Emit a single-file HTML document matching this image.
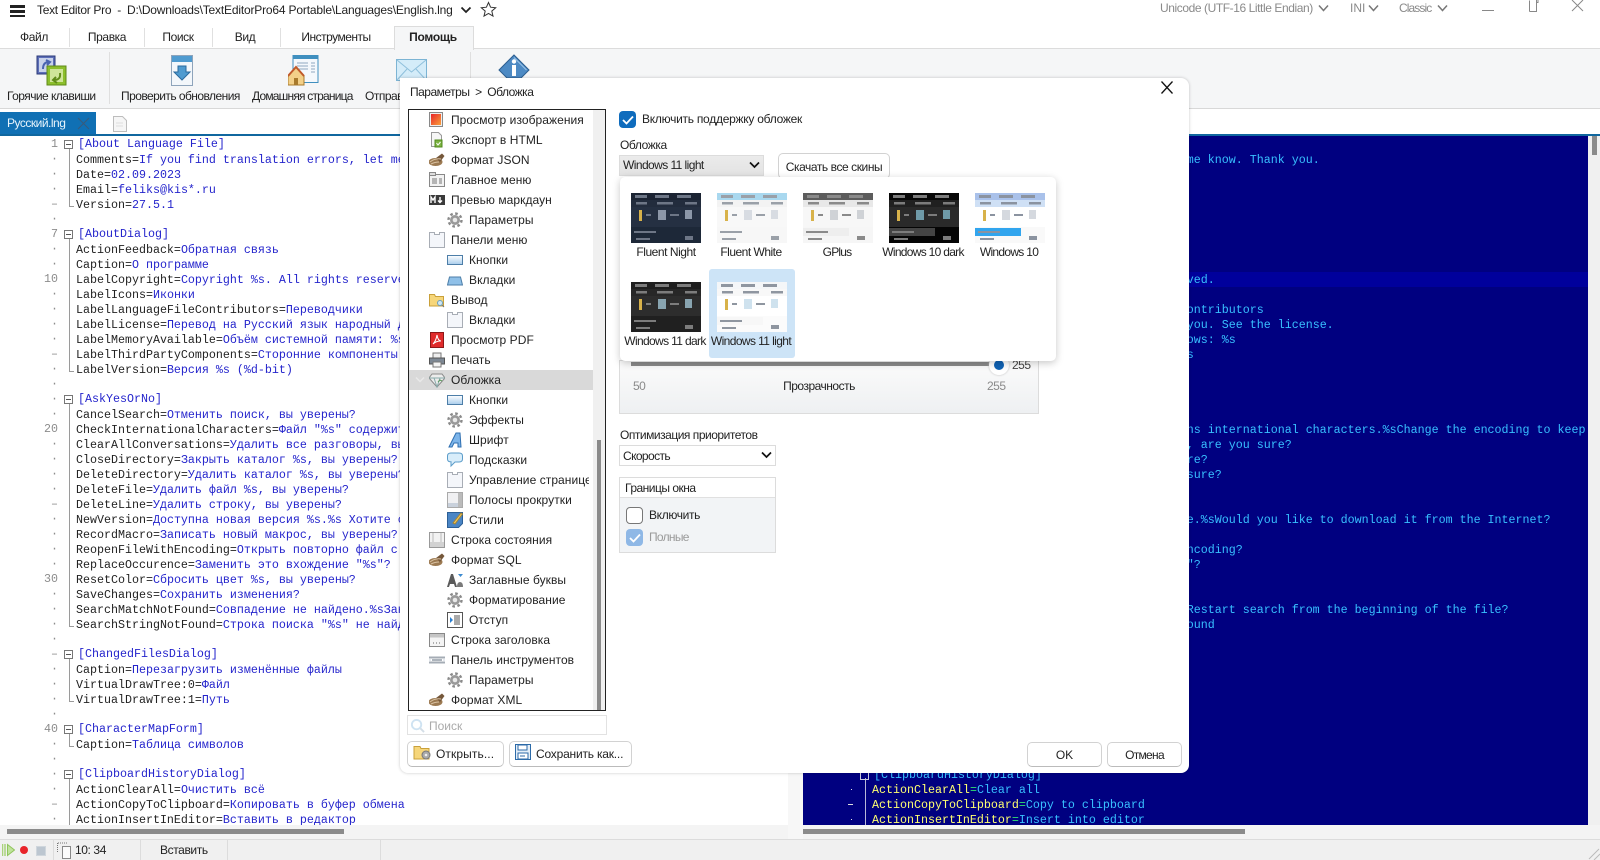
<!DOCTYPE html>
<html lang="ru"><head><meta charset="utf-8"><title>Text Editor Pro</title>
<style>
html,body{margin:0;padding:0;width:1600px;height:860px;overflow:hidden;background:#fff}
body{position:relative;font:12px/16px "Liberation Sans","Noto Sans CJK SC",sans-serif;color:#222}
.a{position:absolute;white-space:pre}
.c{transform:translateX(-50%)}
.g{color:#8a8a8a}
.m{font:11.67px/15px "Liberation Mono",monospace;white-space:pre}
.e{position:absolute;top:138px;left:76px;color:#222;white-space:normal!important}
.e div{height:15px;white-space:pre}
.e b,.e u{font-weight:400;text-decoration:none;color:#2424cc}
.e u{margin-left:2px;position:relative;top:-1px}
.num{position:absolute;top:137px;left:0;width:58px;text-align:right;color:#8c8c8c}
.num div{height:15px}
.fl{position:absolute;left:69px;width:4px;border-left:1px solid #9a9a9a;border-bottom:1px solid #9a9a9a}
.bx{position:absolute;left:64px;width:7px;height:7px;border:1px solid #777;background:#fff}
.bx:after{content:"";position:absolute;left:1px;top:3px;width:5px;height:1px;background:#555}
.rl{position:absolute;left:872px;color:#ffff70;margin-top:1px}
.rl i{font-style:normal;color:#30e070}
.rl b{font-weight:400;color:#38c0ff}
.dlg{position:absolute;left:400px;top:78px;width:789px;height:695px;background:#fff;border-radius:0 8px 8px 8px;box-shadow:0 0 3px rgba(0,0,0,.22)}
.btn{position:absolute;box-sizing:border-box;background:#fff;border:1px solid #d2d2d2;border-bottom-color:#bbb;border-radius:5px;text-align:center}
.tree{position:absolute;left:409px;top:110px;width:180px;height:600px;overflow:hidden}
.r{height:20px;line-height:20px;padding-left:42px;position:relative;white-space:nowrap;letter-spacing:.06px}
.r.s{padding-left:60px}
.r svg{position:absolute;left:20px;top:2px;width:16px;height:16px}
.r.s svg{left:38px}
.cb{position:absolute;width:17px;height:17px;box-sizing:border-box;border-radius:4px}
.th{position:absolute;width:70px;height:50px}
.tb{letter-spacing:-.4px}
</style></head><body>
<svg width="0" height="0" style="position:absolute">
<defs>
<linearGradient id="gr" x1="0" y1="0" x2="1" y2="1"><stop offset="0" stop-color="#e8252a"/><stop offset="1" stop-color="#f9a13a"/></linearGradient>
<linearGradient id="bl" x1="0" y1="0" x2="0" y2="1"><stop offset="0" stop-color="#fff"/><stop offset="1" stop-color="#a9cdec"/></linearGradient>
<symbol id="i-img" viewBox="0 0 16 16"><rect x=".5" y=".5" width="13" height="14" fill="#eee" stroke="#888"/><rect x="2" y="2" width="10" height="11" fill="url(#gr)"/></symbol>
<symbol id="i-html" viewBox="0 0 16 16"><path d="M2.500.5h7l3 3v11h-10z" fill="#f6f6f6" stroke="#999"/><rect x="6" y="8" width="7" height="7" fill="#7cb342" stroke="#4f8a1c"/><path d="M7.500 11l1.500 2 2.500-3" fill="none" stroke="#fff"/></symbol>
<symbol id="i-brush" viewBox="0 0 16 16"><ellipse cx="6.500" cy="10" rx="7" ry="4" fill="#9c7a52"/><path d="M7 6l6-4.500 2.500 2.500-4.500 6z" fill="#75573a"/><path d="M1 10q5-4 11-3M2 12q4-2 8-2" stroke="#d9c2a3" fill="none"/></symbol>
<symbol id="i-menu" viewBox="0 0 16 16"><rect x=".5" y="2.500" width="15" height="12" fill="#f2f2f2" stroke="#888"/><rect x=".5" y=".5" width="6" height="3" fill="#ddd" stroke="#888"/><path d="M3 7h5M3 9h5M3 11h5M10 7h3M10 9h3M10 11h3" stroke="#777"/></symbol>
<symbol id="i-md" viewBox="0 0 16 16"><rect y="3" width="16" height="10" fill="#3a3a3a"/><path d="M2 11V5l2 3 2-3v6M11 5v5M9 8.500l2 2 2-2" stroke="#fff" stroke-width="1.400" fill="none"/></symbol>
<symbol id="i-gear" viewBox="0 0 16 16"><circle cx="8" cy="8" r="5" fill="#9a9a9a"/><circle cx="8" cy="8" r="6.500" fill="none" stroke="#8a8a8a" stroke-width="2.400" stroke-dasharray="2.600 2.500"/><circle cx="8" cy="8" r="2.300" fill="#e9e9e9"/></symbol>
<symbol id="i-page" viewBox="0 0 16 16"><path d="M.5 15.500V.5h5v2h5V.5h5v15z" fill="#f4f6fa" stroke="#a8adb5"/></symbol>
<symbol id="i-btn" viewBox="0 0 16 16"><rect x=".5" y="3.500" width="15" height="9" fill="url(#bl)" stroke="#4d7ea8"/></symbol>
<symbol id="i-tab" viewBox="0 0 16 16"><path d="M.5 13l2-8h11l2 8z" fill="#8fc0e8" stroke="#4d7ea8"/></symbol>
<symbol id="i-fold" viewBox="0 0 16 16"><path d="M.5 14V2.500h5l1 2h8V14z" fill="#f6d67a" stroke="#c9a03a"/><circle cx="11" cy="11" r="2.500" fill="#cfe6f5" stroke="#6aa0c0"/><path d="M13 13l2 2" stroke="#777"/></symbol>
<symbol id="i-pdf" viewBox="0 0 16 16"><rect x="1.500" y=".5" width="13" height="15" fill="#e02b2b" stroke="#8d1717"/><path d="M4 12q3-3 4-9 1 6 4 6-5 0-8 3z" fill="none" stroke="#fff"/></symbol>
<symbol id="i-print" viewBox="0 0 16 16"><rect x="4" y="1" width="8" height="5" fill="#eee" stroke="#777"/><rect x=".5" y="6" width="15" height="6" fill="#7d8894" stroke="#555"/><rect x="4" y="10" width="8" height="5" fill="#f4f4f4" stroke="#777"/></symbol>
<symbol id="i-skin" viewBox="0 0 16 16"><path d="M3 2h10l3 4-8 9-8-9z" fill="#ececec" stroke="#8a8a8a"/><path d="M0 6h16M5 6l3 9 3-9" fill="none" stroke="#8aa"/><path d="M9 10l2-2 2 1" stroke="#5a9a5a" fill="none"/></symbol>
<symbol id="i-font" viewBox="0 0 16 16"><path d="M2 15L9 1h4l1 14h-3v-4H7l-2 4z" fill="#7db5ea" stroke="#2f6fb0"/></symbol>
<symbol id="i-tip" viewBox="0 0 16 16"><path d="M4 1h8q3.500 0 3.500 3v3q0 3-3.500 3H8l-4 4v-4.200Q.5 10 .5 7V4Q.5 1 4 1z" fill="#d8edfa" stroke="#5b9cc9"/></symbol>
<symbol id="i-scr" viewBox="0 0 16 16"><rect x=".5" y=".5" width="15" height="15" fill="#f0f0f2" stroke="#aaa"/><rect x="11" y="1" width="4" height="14" fill="#bbb"/><rect x="1" y="11" width="10" height="4" fill="#c9d1dc"/></symbol>
<symbol id="i-sty" viewBox="0 0 16 16"><path d="M.5.5h15v11l-4 4H.5z" fill="#4a85c5" stroke="#2c5f96"/><path d="M6 11L14 1l1.500 1L8 12z" fill="#f0c860" stroke="#a8842c"/></symbol>
<symbol id="i-stat" viewBox="0 0 16 16"><rect x=".5" y=".5" width="15" height="15" fill="#f2f2f2" stroke="#999"/><rect x="1" y="10" width="14" height="5" fill="#d2d2d2"/><path d="M4 1v9M12 1v9" stroke="#bbb"/></symbol>
<symbol id="i-caps" viewBox="0 0 16 16"><path d="M0 15L4 2h2l4 13H8L7 12H3l-1 3z" fill="#5a5a5a"/><path d="M10 15q0-5 3-5t3 5z" fill="#7a7a7a"/><path d="M11 2h5l-2.500 3z" fill="#3c8ad0"/></symbol>
<symbol id="i-ind" viewBox="0 0 16 16"><rect x=".5" y=".5" width="15" height="15" fill="#fff" stroke="#555"/><path d="M3 5l3 3-3 3z" fill="#2a7fd0"/><path d="M7 4h6M7 6h6M7 8h6M7 10h6M7 12h6" stroke="#555"/></symbol>
<symbol id="i-title" viewBox="0 0 16 16"><rect x=".5" y="1.500" width="15" height="13" fill="#f4f4f4" stroke="#888"/><rect x="1" y="2" width="14" height="3.500" fill="#c5c5c5"/><path d="M4 11h1M7 11h1M10 11h1" stroke="#666"/></symbol>
<symbol id="i-tool" viewBox="0 0 16 16"><path d="M0 5.500h16M0 10.500h16" stroke="#a5acb5" stroke-width="2"/><path d="M3 8h10" stroke="#5b6a7a"/><path d="M0 8h2M14 8h2" stroke="#c9d2dc"/></symbol>
<symbol id="th" viewBox="0 0 70 50">
<rect width="70" height="50" fill="var(--b)"/><rect width="70" height="7" fill="var(--t)"/><rect y="7" width="70" height="7" fill="var(--s)"/>
<rect y="14" width="70" height="20" fill="var(--p)"/><rect x="4" y="2" width="12" height="3" fill="var(--f)"/><rect x="24" y="2" width="14" height="3" fill="var(--f)"/><rect x="46" y="2" width="14" height="3" fill="var(--f)"/>
<rect x="5" y="9" width="11" height="2.500" fill="var(--f)"/><rect x="26" y="9" width="16" height="2.500" fill="var(--f)"/><rect x="54" y="9" width="12" height="2.500" fill="var(--f)"/>
<rect x="8" y="17" width="3" height="11" fill="#d8b24a"/><rect x="15" y="21" width="5" height="2" fill="var(--f)"/><rect x="27" y="17" width="8" height="10" fill="var(--x)"/><rect x="39" y="21" width="9" height="2" fill="var(--f)"/><rect x="54" y="17" width="7" height="9" fill="var(--x)"/>
<rect y="35" width="46" height="8" fill="var(--q)"/><rect x="3" y="38" width="22" height="2" fill="var(--f)"/><rect x="5" y="45" width="14" height="2" fill="var(--f)"/><rect x="54" y="43" width="8" height="4" fill="var(--f)"/>
</symbol>
<symbol id="srch" viewBox="0 0 16 16"><circle cx="7" cy="7" r="5" fill="none" stroke="#cfe3f2" stroke-width="2"/><path d="M11 11l4 4" stroke="#d4dee6" stroke-width="2"/></symbol>
</defs></svg>

<!-- title bar -->
<div class="a" style="left:10px;top:5px;width:15px;height:2.500px;background:#222"></div>
<div class="a" style="left:10px;top:10px;width:15px;height:2.500px;background:#222"></div>
<div class="a" style="left:10px;top:14.500px;width:15px;height:2.500px;background:#222"></div>
<div class="a" style="left:37px;top:2px;letter-spacing:-.3px">Text Editor Pro  -  <span style="letter-spacing:-.18px">D:\Downloads\TextEditorPro64 Portable\Languages\English.lng</span></div>
<svg class="a" style="left:460px;top:5px" width="12" height="10"><path d="M1.500 2.500L6 7l4.500-4.500" fill="none" stroke="#222" stroke-width="1.800"/></svg>
<svg class="a" style="left:480px;top:1px" width="17" height="17" viewBox="0 0 17 17"><path d="M8.500 1.500l2.100 4.700 5.100.5-3.900 3.400 1.200 5-4.500-2.700-4.500 2.700 1.200-5L1.300 6.700l5.100-.5z" fill="none" stroke="#333"/></svg>
<div class="a g" style="left:1160px;top:0;letter-spacing:-.42px">Unicode (UTF-16 Little Endian)</div>
<svg class="a" style="left:1318px;top:4px" width="11" height="9"><path d="M1 1.500L5.500 6.500 10 1.500" fill="none" stroke="#777" stroke-width="1.500"/></svg>
<div class="a g" style="left:1350px;top:0">INI</div>
<svg class="a" style="left:1368px;top:4px" width="11" height="9"><path d="M1 1.500L5.500 6.500 10 1.500" fill="none" stroke="#777" stroke-width="1.500"/></svg>
<div class="a g" style="left:1399px;top:0;letter-spacing:-.9px">Classic</div>
<svg class="a" style="left:1437px;top:4px" width="11" height="9"><path d="M1 1.500L5.500 6.500 10 1.500" fill="none" stroke="#777" stroke-width="1.500"/></svg>
<div class="a" style="left:1482px;top:10px;width:12px;height:1px;background:#888"></div>
<svg class="a" style="left:1526px;top:0" width="14" height="12"><path d="M3.500 11.500V.5M3.500 11.500h7V0M10.500 2.500H12V0" fill="none" stroke="#888"/></svg>
<svg class="a" style="left:1571px;top:0" width="13" height="12"><path d="M1 0l11 11M12 0L1 11" stroke="#888"/></svg>

<!-- tabs -->
<div class="a c tb" style="left:34px;top:29px">Файл</div>
<div class="a c tb" style="left:107px;top:29px">Правка</div>
<div class="a c tb" style="left:178px;top:29px">Поиск</div>
<div class="a c tb" style="left:245px;top:29px">Вид</div>
<div class="a c tb" style="left:336px;top:29px;letter-spacing:-.5px">Инструменты</div>
<div class="a" style="left:69px;top:28px;width:1px;height:19px;background:#e0e0e0"></div>
<div class="a" style="left:144px;top:28px;width:1px;height:19px;background:#e0e0e0"></div>
<div class="a" style="left:212px;top:28px;width:1px;height:19px;background:#e0e0e0"></div>
<div class="a" style="left:280px;top:28px;width:1px;height:19px;background:#e0e0e0"></div>
<!-- ribbon -->
<div class="a" style="left:0;top:48px;width:1600px;height:59px;background:#f5f6f7;border-top:1px solid #dcdcdc;border-bottom:1px solid #d8d8d8"></div>
<div class="a" style="left:394px;top:26px;width:78px;height:23px;background:#f5f6f7;border:1px solid #dcdcdc;border-bottom:0;box-sizing:content-box"></div>
<div class="a c" style="left:433px;top:29px;font-weight:700;letter-spacing:-.25px">Помощь</div>
<div class="a" style="left:109px;top:52px;width:1px;height:52px;background:#dfdfdf"></div>
<div class="a" style="left:470px;top:52px;width:1px;height:52px;background:#dfdfdf"></div>
<svg class="a" style="left:36px;top:55px" width="31" height="31" viewBox="0 0 31 31"><rect x="1" y="1" width="18" height="18" fill="#5d6fb8" stroke="#2c3a78"/><rect x="3" y="3" width="14" height="14" fill="#c8d2ea"/><path d="M7 14q0-7 6-7M10 5l4 2-3 3" fill="none" stroke="#4a64b0" stroke-width="2"/><rect x="11" y="11" width="19" height="19" fill="#8cbf2c" stroke="#5f8a18"/><rect x="14" y="14" width="13" height="13" fill="#cfe59a"/><path d="M24 18q1 7-6 7M21 28l-4-3 3-3" fill="none" stroke="#5f8a18" stroke-width="2"/></svg>
<svg class="a" style="left:171px;top:55px" width="22" height="31" viewBox="0 0 22 31"><rect x=".5" y=".5" width="21" height="30" fill="#f3f7fb" stroke="#8ea4bb"/><rect x="1" y="1" width="20" height="6" fill="#4f9bd0"/><path d="M7 11h8v6h4l-8 8-8-8h4z" fill="#4f9bd0" stroke="#2a6a9e"/></svg>
<svg class="a" style="left:288px;top:55px" width="31" height="31" viewBox="0 0 31 31"><rect x="5" y=".5" width="25" height="27" fill="#f4f8fc" stroke="#3f8fbf"/><rect x="5" y="1" width="25" height="3" fill="#3f8fbf"/><path d="M9 8h11M9 11h11M9 14h11M23 8h4M23 11h4M23 14h4M23 17h4" stroke="#8fa9bf"/><path d="M0 21L8 12l8 9v9H0z" fill="#f3d088" stroke="#a87a2c"/><path d="M0 21L8 12l8 9" fill="none" stroke="#c05a2a" stroke-width="2"/><rect x="6" y="23" width="4" height="7" fill="#a87a2c"/></svg>
<svg class="a" style="left:396px;top:59px" width="31" height="22" viewBox="0 0 31 22"><rect x=".5" y=".5" width="30" height="21" fill="#d4ecf9" stroke="#7cb4d4"/><path d="M1 1l14.500 12L30 1M1 21l10-11M30 21L20 10" fill="none" stroke="#8fc0dc"/></svg>
<svg class="a" style="left:498px;top:54px" width="32" height="24" viewBox="0 0 32 24"><path d="M16 1l15 15-8 8H9l-8-8z" fill="#4d8ac4" stroke="#2c5e90"/><path d="M16 3.500L28.500 16" fill="none" stroke="#9cc4e8"/><rect x="14" y="11" width="4" height="11" fill="#fff"/><circle cx="16" cy="7.500" r="2.200" fill="#fff"/></svg>
<div class="a" style="left:7px;top:88px;letter-spacing:-.55px">Горячие клавиши</div>
<div class="a" style="left:121px;top:88px;letter-spacing:-.55px">Проверить обновления</div>
<div class="a" style="left:252px;top:88px;letter-spacing:-.8px">Домашняя страница</div>
<div class="a" style="left:365px;top:88px;letter-spacing:-.5px">Отправить</div>

<!-- doc tab -->
<div class="a" style="left:0;top:112px;width:96px;height:22px;background:#1070b4"></div>
<div class="a" style="left:7px;top:115px;color:#e8f4fc;letter-spacing:-.5px">Русский.lng</div>
<svg class="a" style="left:77px;top:117px" width="13" height="13"><path d="M1 1l11 11M12 1L1 12" stroke="#3a5a7a"/></svg>
<svg class="a" style="left:113px;top:116px" width="14" height="16" viewBox="0 0 14 16"><path d="M.5.5h9l4 4v11H.500z" fill="#f6f6f6" stroke="#bdbdbd"/><path d="M3 7h7M3 10h7" stroke="#ddd"/></svg>
<div class="a" style="left:0;top:134px;width:1600px;height:2px;background:#10679f"></div>

<!-- left editor -->
<div class="a m num" style="white-space:normal"><div>1</div><div>·</div><div>·</div><div>·</div><div>–</div><div>·</div><div>7</div><div>·</div><div>·</div><div>10</div><div>·</div><div>·</div><div>·</div><div>·</div><div>–</div><div>·</div><div>·</div><div>·</div><div>·</div><div>20</div><div>·</div><div>·</div><div>·</div><div>·</div><div>–</div><div>·</div><div>·</div><div>·</div><div>·</div><div>30</div><div>·</div><div>·</div><div>·</div><div>·</div><div>–</div><div>·</div><div>·</div><div>·</div><div>·</div><div>40</div><div>·</div><div>·</div><div>·</div><div>·</div><div>–</div><div>·</div></div>
<div class="fl" style="top:148px;height:58px"></div><div class="fl" style="top:238px;height:133px"></div><div class="fl" style="top:403px;height:223px"></div><div class="fl" style="top:658px;height:43px"></div><div class="fl" style="top:733px;height:13px"></div><div class="fl" style="top:778px;height:47px;border-bottom:0"></div>
<div class="bx" style="top:140px"></div><div class="bx" style="top:230px"></div><div class="bx" style="top:395px"></div><div class="bx" style="top:650px"></div><div class="bx" style="top:725px"></div><div class="bx" style="top:770px"></div>
<div class="a m e">
<div><u>[About Language File]</u></div>
<div>Comments=<b>If you find translation errors, let me know. Thank you.</b></div>
<div>Date=<b>02.09.2023</b></div>
<div>Email=<b>feliks@kis*.ru</b></div>
<div>Version=<b>27.5.1</b></div>
<div></div>
<div><u>[AboutDialog]</u></div>
<div>ActionFeedback=<b>Обратная связь</b></div>
<div>Caption=<b>О программе</b></div>
<div>LabelCopyright=<b>Copyright %s. All rights reserved.</b></div>
<div>LabelIcons=<b>Иконки</b></div>
<div>LabelLanguageFileContributors=<b>Переводчики</b></div>
<div>LabelLicense=<b>Перевод на Русский язык народный дар</b></div>
<div>LabelMemoryAvailable=<b>Объём системной памяти: %s</b></div>
<div>LabelThirdPartyComponents=<b>Сторонние компоненты</b></div>
<div>LabelVersion=<b>Версия %s (%d-bit)</b></div>
<div></div>
<div><u>[AskYesOrNo]</u></div>
<div>CancelSearch=<b>Отменить поиск, вы уверены?</b></div>
<div>CheckInternationalCharacters=<b>Файл "%s" содержит</b></div>
<div>ClearAllConversations=<b>Удалить все разговоры, вы уверены?</b></div>
<div>CloseDirectory=<b>Закрыть каталог %s, вы уверены?</b></div>
<div>DeleteDirectory=<b>Удалить каталог %s, вы уверены?</b></div>
<div>DeleteFile=<b>Удалить файл %s, вы уверены?</b></div>
<div>DeleteLine=<b>Удалить строку, вы уверены?</b></div>
<div>NewVersion=<b>Доступна новая версия %s.%s Хотите скачать?</b></div>
<div>RecordMacro=<b>Записать новый макрос, вы уверены?</b></div>
<div>ReopenFileWithEncoding=<b>Открыть повторно файл с кодировкой?</b></div>
<div>ReplaceOccurence=<b>Заменить это вхождение "%s"?</b></div>
<div>ResetColor=<b>Сбросить цвет %s, вы уверены?</b></div>
<div>SaveChanges=<b>Сохранить изменения?</b></div>
<div>SearchMatchNotFound=<b>Совпадение не найдено.%sЗаново?</b></div>
<div>SearchStringNotFound=<b>Строка поиска "%s" не найдена</b></div>
<div></div>
<div><u>[ChangedFilesDialog]</u></div>
<div>Caption=<b>Перезагрузить изменённые файлы</b></div>
<div>VirtualDrawTree:0=<b>Файл</b></div>
<div>VirtualDrawTree:1=<b>Путь</b></div>
<div></div>
<div><u>[CharacterMapForm]</u></div>
<div>Caption=<b>Таблица символов</b></div>
<div></div>
<div><u>[ClipboardHistoryDialog]</u></div>
<div>ActionClearAll=<b>Очистить всё</b></div>
<div>ActionCopyToClipboard=<b>Копировать в буфер обмена</b></div>
<div style="height:12px;overflow:hidden">ActionInsertInEditor=<b>Вставить в редактор</b></div>
</div>
<!-- mask below left editor -->
<div class="a" style="left:0;top:825px;width:1600px;height:15px;background:#f4f4f4"></div>
<div class="a" style="left:7px;top:829px;width:337px;height:5px;background:#8b8b8b"></div>
<div class="a" style="left:788px;top:136px;width:15px;height:704px;background:#f7f7f7"></div>

<!-- right editor -->
<div class="a" style="left:803px;top:136px;width:785px;height:689px;background:#000080"></div>
<div class="a" style="left:803px;top:272px;width:785px;height:15px;background:#00009c"></div>
<div class="a" style="left:1588px;top:136px;width:12px;height:689px;background:#f0f0f0"></div>
<div class="a" style="left:1592px;top:136px;width:5px;height:19px;background:#8b8b8b"></div>
<div class="a" style="left:803px;top:829px;width:442px;height:5px;background:#8b8b8b"></div>
<div class="a m rl" style="top:152px">Comments<i>=</i><b>If you find translation errors, let me know. Thank you.</b></div>
<div class="a m rl" style="top:272px">LabelCopyright<i>=</i><b>Copyright %s. All rights reserved.</b></div>
<div class="a m rl" style="top:302px">LabelLanguageFileContributors<i>=</i><b>Language file contributors</b></div>
<div class="a m rl" style="top:317px">LabelLicense<i>=</i><b>This translation is provided to you. See the license.</b></div>
<div class="a m rl" style="top:332px">LabelMemoryAvailable<i>=</i><b>Available memory in Windows: %s</b></div>
<div class="a m rl" style="top:347px">LabelThirdPartyComponents<i>=</i><b>Third party used: %s</b></div>
<div class="a m rl" style="top:422px">CheckInternationalCharacters<i>=</i><b>File "%s" contains international characters.%sChange the encoding to keep</b></div>
<div class="a m rl" style="top:437px">ClearAllConversations<i>=</i><b>Clear all conversations, are you sure?</b></div>
<div class="a m rl" style="top:452px">CloseDirectory<i>=</i><b>Close directory %s, are you sure?</b></div>
<div class="a m rl" style="top:467px">DeleteDirectory<i>=</i><b>Delete directory %s, are you sure?</b></div>
<div class="a m rl" style="top:512px">NewVersion<i>=</i><b>A new version of it %s is available.%sWould you like to download it from the Internet?</b></div>
<div class="a m rl" style="top:542px">ReopenFileWithEncoding<i>=</i><b>Reopen the file with encoding?</b></div>
<div class="a m rl" style="top:557px">ReplaceOccurence<i>=</i><b>Replace the occurence of "%s"?</b></div>
<div class="a m rl" style="top:602px">SearchMatchNotFound<i>=</i><b>Search match not found.%sRestart search from the beginning of the file?</b></div>
<div class="a m rl" style="top:617px">SearchStringNotFound<i>=</i><b>Search string "%s" not found</b></div>
<div class="a m rl" style="top:767px;left:874px"><b>[ClipboardHistoryDialog]</b></div>
<div class="a m rl" style="top:782px">ActionClearAll<i>=</i><b>Clear all</b></div>
<div class="a m rl" style="top:797px">ActionCopyToClipboard<i>=</i><b>Copy to clipboard</b></div>
<div class="a m rl" style="top:812px;height:12px;overflow:hidden">ActionInsertInEditor<i>=</i><b>Insert into editor</b></div>
<div class="a" style="left:865px;top:778px;width:1px;height:47px;background:#b8b8d8"></div>
<div class="a" style="left:860px;top:771px;width:7px;height:7px;border:1px solid #ccd"></div>
<div class="a" style="left:851px;top:789px;width:1px;height:1px;background:#ddd"></div>
<div class="a" style="left:848px;top:804px;width:5px;height:1px;background:#ddd"></div>
<div class="a" style="left:851px;top:819px;width:1px;height:1px;background:#ddd"></div>

<!-- status bar -->
<div class="a" style="left:0;top:839px;width:1600px;height:21px;background:#f0f0f0;border-top:1px solid #dcdcdc;box-sizing:border-box"></div>
<svg class="a" style="left:2px;top:843px" width="13" height="14"><path d="M.5 1v12M3 1v12" stroke="#a9d27a" stroke-width="1.500"/><path d="M5.500 1.500L12.500 7l-7 5.500z" fill="#bfe39b" stroke="#8fc45c"/></svg>
<div class="a" style="left:20px;top:846px;width:8px;height:8px;border-radius:50%;background:#e8242a"></div>
<div class="a" style="left:36px;top:846px;width:8px;height:8px;background:#bcc6d0;border:1px solid #cfd6dc;box-sizing:content-box"></div>
<div class="a" style="left:53px;top:840px;width:1px;height:20px;background:#dcdcdc"></div>
<svg class="a" style="left:57px;top:842px" width="14" height="17"><path d="M5.500 4.500h8v12h-8z" fill="#fbfbfb" stroke="#888"/><path d="M.5 1v10M1 1h10" stroke="#777" stroke-dasharray="1 1"/></svg>
<div class="a" style="left:75px;top:842px;letter-spacing:-.4px">10: 34</div>
<div class="a" style="left:140px;top:840px;width:1px;height:20px;background:#dcdcdc"></div>
<div class="a" style="left:160px;top:842px;letter-spacing:-.4px">Вставить</div>
<div class="a" style="left:227px;top:840px;width:1px;height:20px;background:#dcdcdc"></div>
<div class="a" style="left:380px;top:840px;width:1px;height:20px;background:#dcdcdc"></div>
<svg class="a" style="left:1588px;top:848px" width="12" height="12"><path d="M11 1L1 11M12 6l-6 6" stroke="#bbb"/></svg>

<!-- dialog -->
<div class="dlg"></div>
<div class="a" style="left:410px;top:84px;letter-spacing:-.5px">Параметры  &gt;  Обложка</div>
<svg class="a" style="left:1161px;top:81px" width="12" height="13"><path d="M.5.5l11 12M11.500.5l-11 12" stroke="#111" stroke-width="1.300"/></svg>

<div class="a" style="left:408px;top:109px;width:198px;height:602px;box-sizing:border-box;border:1px solid #222;background:#fff"></div>
<div class="a" style="left:593px;top:110px;width:12px;height:600px;background:#f0f0f0"></div>
<div class="a" style="left:597px;top:440px;width:4px;height:270px;background:#8b8b8b"></div>
<div class="a" style="left:409px;top:370px;width:184px;height:20px;background:#d9d9d9"></div>
<svg class="a" style="left:415px;top:376px" width="10" height="8"><path d="M1 1.500L5 5.500 9 1.500" fill="none" stroke="#e9e9e9" stroke-width="1.500"/></svg>
<div class="tree">
<div class="r"><svg><use href="#i-img"/></svg>Просмотр изображения</div>
<div class="r"><svg><use href="#i-html"/></svg>Экспорт в HTML</div>
<div class="r"><svg><use href="#i-brush"/></svg>Формат JSON</div>
<div class="r"><svg><use href="#i-menu"/></svg>Главное меню</div>
<div class="r"><svg><use href="#i-md"/></svg>Превью маркдаун</div>
<div class="r s"><svg><use href="#i-gear"/></svg>Параметры</div>
<div class="r"><svg><use href="#i-page"/></svg>Панели меню</div>
<div class="r s"><svg><use href="#i-btn"/></svg>Кнопки</div>
<div class="r s"><svg><use href="#i-tab"/></svg>Вкладки</div>
<div class="r"><svg><use href="#i-fold"/></svg>Вывод</div>
<div class="r s"><svg><use href="#i-page"/></svg>Вкладки</div>
<div class="r"><svg><use href="#i-pdf"/></svg>Просмотр PDF</div>
<div class="r"><svg><use href="#i-print"/></svg>Печать</div>
<div class="r"><svg><use href="#i-skin"/></svg>Обложка</div>
<div class="r s"><svg><use href="#i-btn"/></svg>Кнопки</div>
<div class="r s"><svg><use href="#i-gear"/></svg>Эффекты</div>
<div class="r s"><svg><use href="#i-font"/></svg>Шрифт</div>
<div class="r s"><svg><use href="#i-tip"/></svg>Подсказки</div>
<div class="r s"><svg><use href="#i-page"/></svg>Управление страницей</div>
<div class="r s"><svg><use href="#i-scr"/></svg>Полосы прокрутки</div>
<div class="r s"><svg><use href="#i-sty"/></svg>Стили</div>
<div class="r"><svg><use href="#i-stat"/></svg>Строка состояния</div>
<div class="r"><svg><use href="#i-brush"/></svg>Формат SQL</div>
<div class="r s"><svg><use href="#i-caps"/></svg>Заглавные буквы</div>
<div class="r s"><svg><use href="#i-gear"/></svg>Форматирование</div>
<div class="r s"><svg><use href="#i-ind"/></svg>Отступ</div>
<div class="r"><svg><use href="#i-title"/></svg>Строка заголовка</div>
<div class="r"><svg><use href="#i-tool"/></svg>Панель инструментов</div>
<div class="r s"><svg><use href="#i-gear"/></svg>Параметры</div>
<div class="r"><svg><use href="#i-brush"/></svg>Формат XML</div>
</div>

<!-- search and bottom buttons -->
<div class="a" style="left:407px;top:715px;width:200px;height:20px;box-sizing:border-box;border:1px solid #e2e2e2;background:#fff"></div>
<svg class="a" style="left:410px;top:718px;width:15px;height:15px"><use href="#srch"/></svg>
<div class="a" style="left:429px;top:718px;color:#aaa">Поиск</div>
<div class="btn" style="left:407px;top:741px;width:97px;height:26px"></div>
<svg class="a" style="left:413px;top:744px" width="18" height="17" viewBox="0 0 18 17"><path d="M1 15V2.500h6l1 2h8V15z" fill="#f6d67a" stroke="#c9a03a"/><circle cx="13" cy="11" r="4" fill="#aaa" stroke="#777"/><circle cx="13" cy="11" r="1.300" fill="#eee"/></svg>
<div class="a" style="left:436px;top:746px;letter-spacing:.1px">Открыть...</div>
<div class="btn" style="left:509px;top:741px;width:123px;height:26px"></div>
<svg class="a" style="left:515px;top:744px" width="17" height="17" viewBox="0 0 17 17"><rect x=".5" y=".5" width="15" height="15" fill="#e4eef8" stroke="#2c6aa8"/><rect x="3" y="1" width="9" height="5" fill="#fff" stroke="#2c6aa8"/><rect x="3" y="9" width="10" height="6" fill="#fff" stroke="#2c6aa8"/><path d="M5 12h5" stroke="#2c6aa8"/></svg>
<div class="a" style="left:536px;top:746px;letter-spacing:-.2px">Сохранить как...</div>
<div class="btn" style="left:1027px;top:742px;width:75px;height:25px;line-height:24px">OK</div>
<div class="btn" style="left:1107px;top:742px;width:75px;height:25px;line-height:24px;letter-spacing:-.7px">Отмена</div>

<!-- right pane of dialog -->
<div class="cb" style="left:619px;top:111px;background:#0f6cbd"></div>
<svg class="a" style="left:622px;top:115px" width="12" height="10"><path d="M1 5l3.500 3.500L11 1.500" fill="none" stroke="#fff" stroke-width="1.800"/></svg>
<div class="a" style="left:642px;top:111px;letter-spacing:-.26px">Включить поддержку обложек</div>
<div class="a" style="left:620px;top:137px;letter-spacing:-.4px">Обложка</div>
<div class="a" style="left:619px;top:155px;width:145px;height:21px;box-sizing:border-box;background:linear-gradient(#ebebeb,#e3e3e3);border:1px solid #dcdcdc"></div>
<div class="a" style="left:623px;top:157px;letter-spacing:-.57px">Windows 11 light</div>
<svg class="a" style="left:749px;top:161px" width="11" height="8"><path d="M1 1.500l4.500 4.500L10 1.500" fill="none" stroke="#111" stroke-width="1.700"/></svg>
<div class="btn" style="left:778px;top:153px;width:112px;height:26px;line-height:26px;letter-spacing:-.43px">Скачать все скины</div>

<div class="a" style="left:619px;top:360px;width:420px;height:54px;box-sizing:border-box;background:linear-gradient(#fbfbfb,#eef0f2);border:1px solid #dcdcdc"></div>
<div class="a" style="left:631px;top:362px;width:368px;height:4px;background:#8b8b8b"></div>
<div class="a" style="left:989px;top:355px;width:20px;height:20px;border-radius:50%;background:#fff;box-shadow:0 0 2px #bbb"></div>
<div class="a" style="left:994px;top:360px;width:10px;height:10px;border-radius:50%;background:#0f62b4"></div>
<div class="a" style="left:1012px;top:357px;color:#444;letter-spacing:-.5px">255</div>
<div class="a g" style="left:633px;top:378px;letter-spacing:-.5px">50</div>
<div class="a c" style="left:819px;top:378px;letter-spacing:-.5px">Прозрачность</div>
<div class="a g" style="left:987px;top:378px;letter-spacing:-.5px">255</div>

<!-- skin popup -->
<div class="a" style="left:620px;top:177px;width:436px;height:184px;background:#fff;border-radius:5px;box-shadow:0 2px 8px rgba(0,0,0,.22)"></div>
<div class="a" style="left:709px;top:269px;width:86px;height:89px;background:#cde4f7;border-radius:3px"></div>
<svg class="th" style="left:631px;top:193px;--b:#1d2838;--t:#1b2332;--s:#222c3d;--p:#253042;--q:#1d2838;--f:#6d7686;--x:#8c97a8"><use href="#th"/></svg>
<svg class="th" style="left:717px;top:193px;--b:#f7f7f7;--t:#a9d8ef;--s:#f3f3f3;--p:#f8f8f8;--q:#f7f7f7;--f:#9aa0a8;--x:#d8dce2"><use href="#th"/></svg>
<svg class="th" style="left:803px;top:193px;--b:#f6f6f6;--t:#5c5c5c;--s:#e8e8e8;--p:#f7f7f7;--q:#eeeeee;--f:#8a8a8a;--x:#cfd2d6"><use href="#th"/></svg>
<svg class="th" style="left:889px;top:193px;--b:#050505;--t:#070707;--s:#202020;--p:#2a2a2a;--q:#444;--f:#7c7c7c;--x:#6f9aa8"><use href="#th"/></svg>
<svg class="th" style="left:975px;top:193px;--b:#f9f9f9;--t:#a9c1ea;--s:#cfe0f5;--p:#fff;--q:#31a5ee;--f:#8b93a0;--x:#d5d9df"><use href="#th"/></svg>
<svg class="th" style="left:631px;top:282px;--b:#202020;--t:#1e1e1e;--s:#272727;--p:#2d2d2d;--q:#202020;--f:#7c7c7c;--x:#88a4b0"><use href="#th"/></svg>
<svg class="th" style="left:717px;top:282px;--b:#fbfbfb;--t:#f4f6f8;--s:#f8f8f8;--p:#fff;--q:#f7f7f7;--f:#8f96a0;--x:#cfe2ee"><use href="#th"/></svg>
<div class="a c" style="left:666px;top:244px;letter-spacing:-.45px">Fluent Night</div>
<div class="a c" style="left:751px;top:244px;letter-spacing:-.5px">Fluent White</div>
<div class="a c" style="left:837px;top:244px;letter-spacing:-.8px">GPlus</div>
<div class="a c" style="left:923px;top:244px;letter-spacing:-.7px">Windows 10 dark</div>
<div class="a c" style="left:1009px;top:244px;letter-spacing:-.7px">Windows 10</div>
<div class="a c" style="left:665px;top:333px;letter-spacing:-.65px">Windows 11 dark</div>
<div class="a c" style="left:751px;top:333px;letter-spacing:-.6px">Windows 11 light</div>

<!-- priorities -->
<div class="a" style="left:620px;top:427px;letter-spacing:-.48px">Оптимизация приоритетов</div>
<div class="a" style="left:619px;top:445px;width:157px;height:21px;box-sizing:border-box;background:#fff;border:1px solid #dcdcdc"></div>
<div class="a" style="left:623px;top:448px;letter-spacing:-.6px">Скорость</div>
<svg class="a" style="left:761px;top:451px" width="11" height="8"><path d="M1 1.500l4.500 4.500L10 1.500" fill="none" stroke="#111" stroke-width="1.700"/></svg>
<div class="a" style="left:619px;top:477px;width:157px;height:76px;box-sizing:border-box;border:1px solid #dcdcdc;background:#f2f4f6"></div>
<div class="a" style="left:620px;top:478px;width:155px;height:19px;background:#fff;border-bottom:1px solid #e0e0e0"></div>
<div class="a" style="left:625px;top:480px;letter-spacing:-.5px">Границы окна</div>
<div class="cb" style="left:626px;top:507px;background:#fff;border:1px solid #777"></div>
<div class="a" style="left:649px;top:507px;letter-spacing:-.35px">Включить</div>
<div class="cb" style="left:626px;top:529px;background:#8fb8e6"></div>
<svg class="a" style="left:629px;top:533px" width="12" height="10"><path d="M1 5l3.500 3.500L11 1.500" fill="none" stroke="#fff" stroke-width="1.800"/></svg>
<div class="a" style="left:649px;top:529px;color:#9a9a9a;letter-spacing:-.7px">Полные</div>
</body></html>
